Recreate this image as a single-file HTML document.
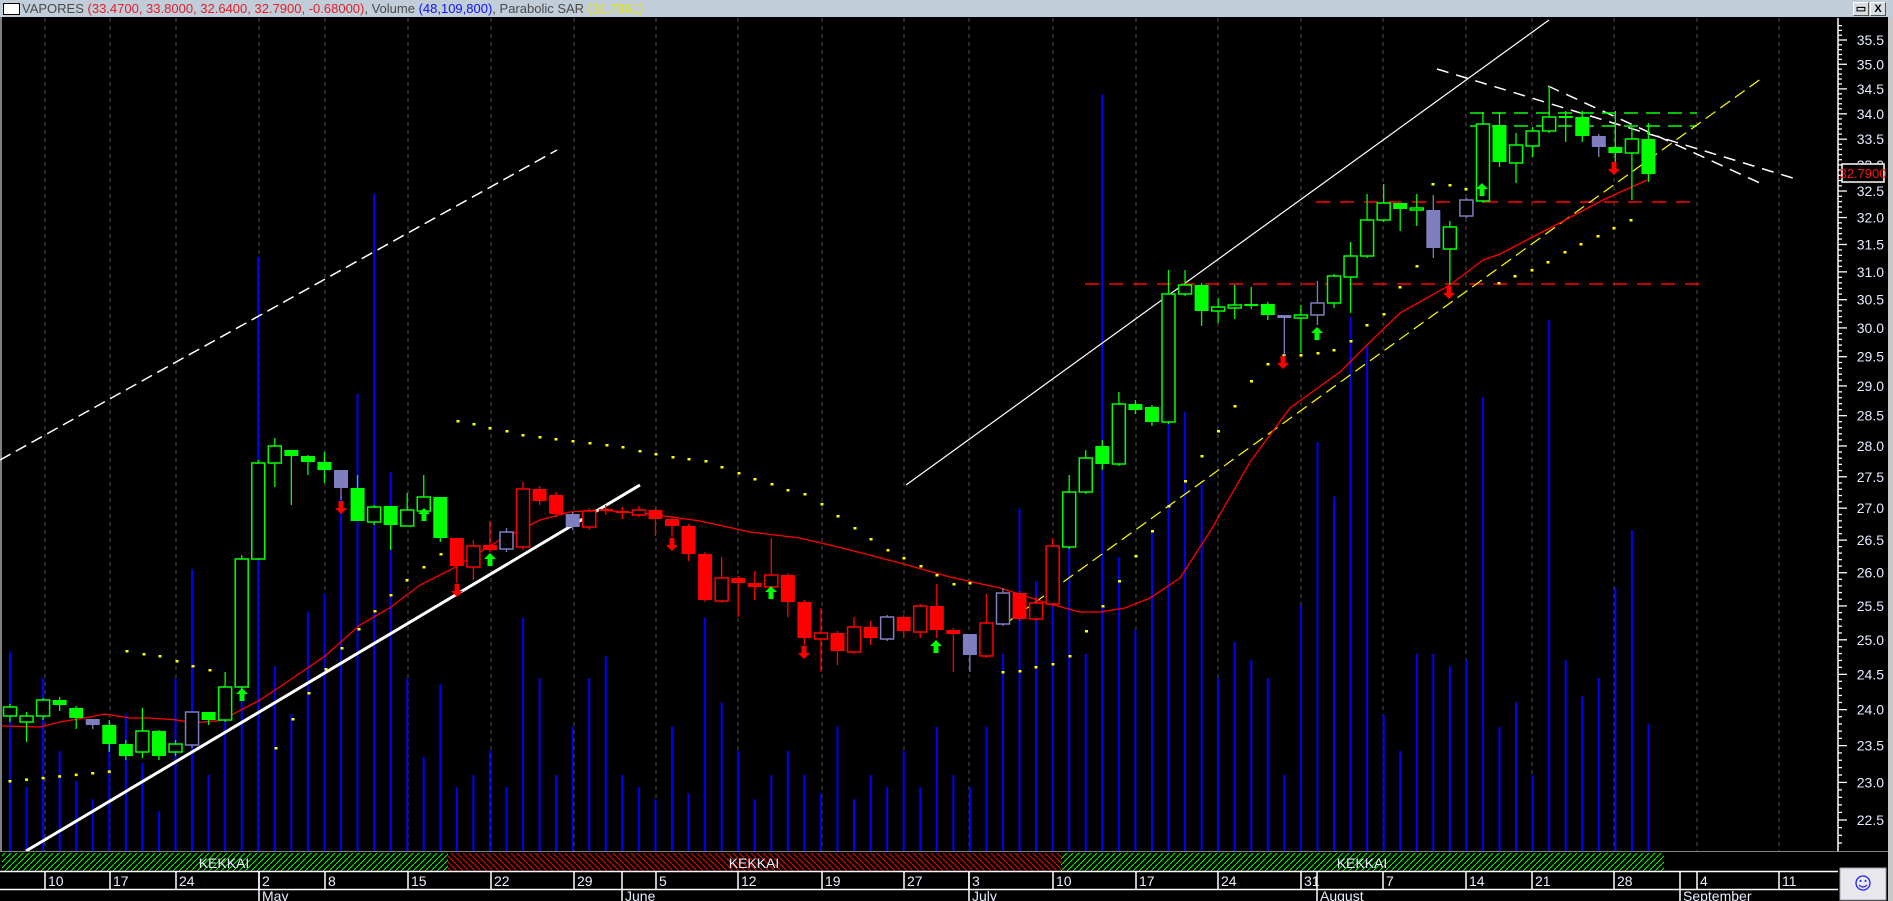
<!DOCTYPE html>
<html><head><meta charset="utf-8">
<style>
html,body{margin:0;padding:0;background:#000;overflow:hidden}
body{width:1893px;height:901px;position:relative;font-family:"Liberation Sans",Arial,sans-serif}
#title{position:absolute;left:0;top:0;width:1893px;height:17px;background:#c1cdd9;font-size:13px;line-height:17px;color:#4a4a4a;white-space:nowrap}
#title .ic{position:absolute;left:3px;top:3px;width:15px;height:10px;background:#fff;border:1px solid #000}
#title .t{position:absolute;left:22px;top:0}
.r{color:#e0202a}.b{color:#1010ff}.y{color:#e8e800}
.btn{position:absolute;top:2px;width:14px;height:12px;background:#d8dde4;border:1px solid #fff;border-right-color:#555;border-bottom-color:#555;font-size:11px;line-height:12px;text-align:center;color:#000;font-weight:bold}
svg{position:absolute;left:0;top:0}
</style></head><body>
<div id="title"><div class="ic"></div><div class="t">VAPORES <span class="r">(33.4700, 33.8000, 32.6400, 32.7900, -0.68000)</span>, Volume <span class="b">(48,109,800)</span>, Parabolic SAR <span class="y">(31.7361)</span></div>
<div class="btn" style="left:1853px">&#9645;</div><div class="btn" style="left:1870px">X</div></div>
<svg id="s" width="1893" height="901" viewBox="0 0 1893 901" xmlns="http://www.w3.org/2000/svg" style="top:0"></svg>
<script>
var S=[];
function Y(p){return 40+1710.5*Math.log(35.5/p);}
function X(i){return 10+16.55*i;}
S.push('<rect x="0" y="17" width="1888" height="884" fill="#000"/>');
S.push('<rect x="1888" y="17" width="5" height="884" fill="#c8c8c8"/>');
S.push('<rect x="0" y="17" width="2" height="835" fill="#808080"/>');
var seps=[45,110,176,259,325,408,491,574,656,738,822,904,969,1053,1136,1218,1301,1383,1466,1532,1614,1697,1779];
seps.forEach(function(x){S.push('<line x1="'+x+'" y1="18" x2="'+x+'" y2="851" stroke="#505050" stroke-dasharray="4,4"/>');});
var vp=[[8,538],[22,650],[36,560],[50,620],[63,645],[77,660],[90,610],[104,590],[118,630],[131,670],[145,560],[158,470],[172,640],[186,580],[199,480],[213,212],[227,550],[241,590],[255,505],[269,490],[282,410],[296,325],[310,160],[323,390],[337,560],[351,625],[365,565],[378,650],[392,640],[406,620],[419,650],[433,510],[447,560],[461,640],[474,600],[488,560],[502,542],[515,640],[529,650],[542,660],[556,600],[570,655],[584,510],[597,580],[611,620],[625,660],[639,640],[652,620],[666,640],[680,655],[693,600],[707,660],[721,640],[735,650],[749,620],[763,650],[776,600],[790,640],[804,650],[818,600],[832,540],[846,420],[860,480],[873,450],[887,440],[900,540],[914,78],[928,460],[942,520],[955,440],[967,270],[981,340],[995,400],[1008,560],[1022,530],[1036,545],[1050,560],[1064,640],[1077,500],[1091,365],[1105,410],[1118,262],[1132,285],[1146,590],[1159,620],[1173,540],[1187,540],[1200,550],[1214,545],[1227,328],[1241,600],[1255,580],[1268,640],[1282,264],[1296,545],[1310,575],[1324,560],[1337,485],[1351,438],[1365,598]];
vp.forEach(function(v,i){var x=X(i);S.push('<line x1="'+x+'" y1="851" x2="'+x+'" y2="'+(v[1]*1.211)+'" stroke="#0000ff" stroke-width="2"/>');});
S.push('<line x1="0" y1="460" x2="557" y2="150" stroke="#fff" stroke-width="1.5" stroke-dasharray="12,6"/>');
S.push('<line x1="906" y1="485" x2="1549" y2="20" stroke="#fff" stroke-width="1.2"/>');
S.push('<line x1="1437" y1="69" x2="1796" y2="179" stroke="#fff" stroke-width="1.5" stroke-dasharray="12,8"/>');
S.push('<line x1="1548" y1="86" x2="1762" y2="184" stroke="#fff" stroke-width="1.5" stroke-dasharray="12,8"/>');
S.push('<line x1="1470" y1="113" x2="1697" y2="113" stroke="#00ff00" stroke-width="1.5" stroke-dasharray="14,8"/>');
S.push('<line x1="1470" y1="126" x2="1697" y2="126" stroke="#00ff00" stroke-width="1.5" stroke-dasharray="14,8"/>');
S.push('<line x1="1316" y1="202" x2="1700" y2="202" stroke="#ff0000" stroke-width="1.5" stroke-dasharray="14,10"/>');
S.push('<line x1="1085" y1="284" x2="1700" y2="284" stroke="#ff0000" stroke-width="1.5" stroke-dasharray="14,10"/>');
S.push('<line x1="1005" y1="624" x2="1762" y2="78" stroke="#ffff00" stroke-width="1.2" stroke-dasharray="12,6"/>');
var ma=[[2,726],[40,727],[60,722],[90,717],[105,714],[130,718],[150,718],[177,720],[193,723],[225,720],[235,713],[260,700],[290,680],[325,656],[360,625],[391,607],[420,585],[450,570],[480,552],[500,540],[540,520],[570,512],[600,510],[650,514],[700,521],[750,532],[800,538],[850,550],[900,563],[950,577],[1000,588],[1050,604],[1080,612],[1100,612],[1125,608],[1150,598],[1180,578],[1211,530],[1250,462],[1290,408],[1340,372],[1367,345],[1400,313],[1450,285],[1483,260],[1500,254],[1550,228],[1603,200],[1647,180]];
S.push('<polyline points="'+ma.map(function(p){return p.join(',')}).join(' ')+'" fill="none" stroke="#ff0000" stroke-width="1.3"/>');
S.push('<line x1="26" y1="851" x2="640" y2="485" stroke="#fff" stroke-width="3"/>');
var sar=[];
for(var i=0;i<7;i++)sar.push([X(i),781-i*1.6]);
[[127,651],[144,654],[160,656],[177,661],[193,666],[210,670],[276,748],[293,719],[309,693],[326,669],[342,648],[359,629],[375,611],[391,595],[407,580],[424,567],[441,554],[458,421],[474,424],[490,428],[507,431],[523,435],[540,437],[556,439],[573,441],[590,443],[607,445],[623,447],[640,451],[656,454],[673,457],[689,459],[706,461],[722,467],[739,473],[755,479],[772,484],[788,490],[805,494],[822,504],[838,516],[855,528],[871,539],[888,550],[904,558],[921,566],[937,575],[954,584],[970,583],[1003,672],[1020,671],[1036,667],[1053,664],[1268,364],[1284,355],[1301,355],[1318,353],[1334,350],[1351,341],[1367,325],[1384,314],[1400,287],[1417,266],[1433,184],[1450,185],[1466,189],[1499,283],[1515,276],[1532,270],[1548,262],[1565,252],[1581,244],[1598,236],[1614,228],[1631,220]].forEach(function(p){sar.push(p)});
for(var i=0;i<12;i++)sar.push([1070+16.5*i,656-i*25]);
sar.forEach(function(p){S.push('<rect x="'+(p[0]-1.5)+'" y="'+(p[1]-1)+'" width="3" height="2.5" fill="#ffff00"/>');});
var C=[[707,716,704,722,'h'],[716,722,712,742,'h'],[700,716,698,720,'h'],[700,705,697,711,'g'],[708,718,706,729,'g'],[719,725,719,729,'p'],[725,744,720,752,'g'],[744,756,740,760,'g'],[731,752,708,758,'h'],[731,756,730,760,'g'],[744,752,740,756,'h'],[712,745,712,748,'P'],[712,720,712,725,'g'],[687,720,672,722,'h'],[559,687,555,690,'h'],[463,559,460,560,'h'],[446,463,438,487,'h'],[450,456,450,505,'g'],[456,462,455,475,'g'],[462,470,452,483,'g'],[470,488,470,500,'p'],[488,521,475,521,'g'],[507,522,505,525,'h'],[506,525,506,550,'g'],[510,526,493,526,'h'],[497,511,475,513,'h'],[497,538,497,542,'g'],[538,566,538,583,'r'],[546,567,540,580,'R'],[545,550,521,552,'r'],[532,549,528,552,'P'],[489,547,482,550,'R'],[489,501,486,505,'r'],[495,514,492,517,'r'],[514,527,512,530,'p'],[511,527,508,530,'R'],[509,511,505,515,'r'],[511,513,507,519,'r'],[510,515,506,517,'R'],[510,519,508,536,'r'],[519,526,516,537,'r'],[526,554,524,561,'r'],[554,600,552,602,'r'],[578,601,557,603,'R'],[578,583,576,617,'r'],[583,587,571,600,'r'],[575,587,538,589,'R'],[575,602,573,617,'r'],[602,638,600,645,'r'],[633,639,608,672,'R'],[633,651,631,665,'r'],[627,652,617,654,'R'],[627,638,621,645,'r'],[617,639,615,641,'P'],[617,631,615,638,'r'],[606,632,604,638,'R'],[606,630,584,638,'r'],[630,634,628,672,'r'],[634,655,634,672,'p'],[623,656,594,658,'R'],[593,624,588,626,'P'],[593,619,591,621,'r'],[603,619,597,621,'R'],[546,604,538,606,'R'],[492,547,475,549,'h'],[458,492,450,494,'h'],[446,464,440,470,'g'],[404,464,392,466,'h'],[404,410,400,414,'g'],[407,422,405,426,'g'],[294,422,270,424,'h'],[285,294,270,296,'h'],[285,311,283,326,'g'],[307,311,298,323,'h'],[305,308,285,319,'h'],[304,306,287,309,'g'],[304,315,302,320,'g'],[315,318,315,355,'p'],[315,318,305,353,'h'],[303,315,281,325,'P'],[276,303,274,308,'h'],[256,277,242,313,'h'],[220,256,194,258,'h'],[203,220,184,222,'h'],[203,209,203,231,'g'],[208,210,194,226,'h'],[210,248,195,258,'p'],[227,249,221,285,'h'],[200,216,198,218,'P'],[124,201,112,203,'h'],[125,162,112,167,'g'],[145,163,133,183,'h'],[131,146,127,157,'h'],[117,131,86,133,'h'],[116,118,111,142,'g'],[117,136,111,142,'g'],[136,147,134,157,'p'],[147,153,111,163,'g'],[139,153,127,200,'h'],[139,174,123,182,'g']];
var col={h:'#00ff00',g:'#00ff00',r:'#ff0000',R:'#ff0000',p:'#7f7fc0',P:'#7f7fc0'};
C.forEach(function(c,i){var x=X(i),k=c[4],cl=col[k],hollow=(k=='h'||k=='R'||k=='P');
 S.push('<line x1="'+x+'" y1="'+c[2]+'" x2="'+x+'" y2="'+c[3]+'" stroke="'+cl+'" stroke-width="1.3"/>');
 var h=Math.max(c[1]-c[0],2);
 if(hollow)S.push('<rect x="'+(x-6.5)+'" y="'+c[0]+'" width="13" height="'+h+'" fill="#000" stroke="'+cl+'" stroke-width="1.5"/>');
 else S.push('<rect x="'+(x-7)+'" y="'+c[0]+'" width="14" height="'+h+'" fill="'+cl+'"/>');
});
function up(x,y){S.push('<path d="M'+x+' '+y+' l6 6 h-3.5 v7 h-5 v-7 h-3.5z" fill="#00ff00"/>');}
function dn(x,y){S.push('<path d="M'+x+' '+(y+12)+' l6 -6 h-3.5 v-7 h-5 v7 h-3.5z" fill="#ff0000"/>');}
[[242,688],[424,508],[490,553],[771,586],[936,640],[1317,327],[1482,183]].forEach(function(a){up(a[0],a[1])});
[[341,502],[457,585],[672,539],[804,647],[1283,357],[1449,287],[1614,163]].forEach(function(a){dn(a[0],a[1])});
S.push('<rect x="1826" y="17" width="62" height="835" fill="#000"/>');
S.push('<line x1="1838" y1="18" x2="1838" y2="851" stroke="#fff" stroke-width="1.5"/>');
for(var p=22.2;p<=35.85;p+=0.1){var q=Math.round(p*10)/10,y=Y(q);if(y<20||y>850)continue;var major=Math.abs(q*2-Math.round(q*2))<0.01;
 S.push('<line x1="1838" y1="'+y+'" x2="'+(major?1847:1842)+'" y2="'+y+'" stroke="#fff" stroke-width="1.3"/>');
 if(major)S.push('<text x="1884" y="'+(y+5)+'" fill="#e6ecff" font-size="14" text-anchor="end" font-family="Liberation Sans,Arial,sans-serif">'+q.toFixed(1)+'</text>');}
S.push('<rect x="1842" y="164" width="42" height="18" fill="#000" stroke="#fff" stroke-width="1.5"/>');
S.push('<text x="1863" y="178" fill="#ff1010" font-size="13" text-anchor="middle" font-family="Liberation Sans,Arial,sans-serif">32.7900</text>');
S.push('<defs><pattern id="gp" width="6" height="6" patternUnits="userSpaceOnUse"><path d="M-1 7 L7 -1" stroke="#00ff00" stroke-width="1"/></pattern><pattern id="rp" width="6" height="6" patternUnits="userSpaceOnUse"><path d="M-1 -1 L7 7" stroke="#ff0000" stroke-width="1"/></pattern></defs>');
S.push('<rect x="0" y="851" width="1888" height="21" fill="#000"/><line x1="0" y1="851.5" x2="1888" y2="851.5" stroke="#808080"/>');
S.push('<rect x="2" y="853" width="446" height="18" fill="url(#gp)"/><rect x="448" y="853" width="613" height="18" fill="url(#rp)"/><rect x="1061" y="853" width="603" height="18" fill="url(#gp)"/>');
[224,754,1362].forEach(function(x){S.push('<text x="'+x+'" y="868" fill="#e8eeff" font-size="14" text-anchor="middle" font-family="Liberation Sans,Arial,sans-serif">KEKKAI</text>');});
S.push('<rect x="0" y="871" width="1838" height="30" fill="#000"/>');
S.push('<line x1="0" y1="871.5" x2="1838" y2="871.5" stroke="#fff" stroke-width="1.5"/><line x1="0" y1="889.5" x2="1838" y2="889.5" stroke="#fff" stroke-width="1.5"/>');
var dl=['10','17','24','2','8','15','22','29','5','12','19','27','3','10','17','24','31','7','14','21','28','4','11'];
seps.forEach(function(x,i){S.push('<line x1="'+x+'" y1="871" x2="'+x+'" y2="889" stroke="#fff" stroke-width="1.5"/><text x="'+(x+3)+'" y="886" fill="#e8eeff" font-size="14" font-family="Liberation Sans,Arial,sans-serif">'+dl[i]+'</text>');});
[[259,'May'],[622,'June'],[969,'July'],[1317,'August'],[1680,'September']].forEach(function(m){S.push('<line x1="'+m[0]+'" y1="871" x2="'+m[0]+'" y2="901" stroke="#fff" stroke-width="1.5"/><text x="'+(m[0]+3)+'" y="901" fill="#e8eeff" font-size="14" font-family="Liberation Sans,Arial,sans-serif">'+m[1]+'</text>');});
S.push('<rect x="1838" y="852" width="50" height="49" fill="#000"/>');
S.push('<rect x="1840" y="868" width="46" height="32" fill="#e8e8ee" stroke="#a0a0a0"/>');
S.push('<circle cx="1863" cy="883" r="7" fill="none" stroke="#2020ff" stroke-width="1.3"/><circle cx="1860.5" cy="881" r="1" fill="#2020ff"/><circle cx="1865.5" cy="881" r="1" fill="#2020ff"/><path d="M1859 885 q4 4 8 0" fill="none" stroke="#2020ff" stroke-width="1.2"/>');
document.getElementById('s').innerHTML=S.join('');
</script>
</body></html>
